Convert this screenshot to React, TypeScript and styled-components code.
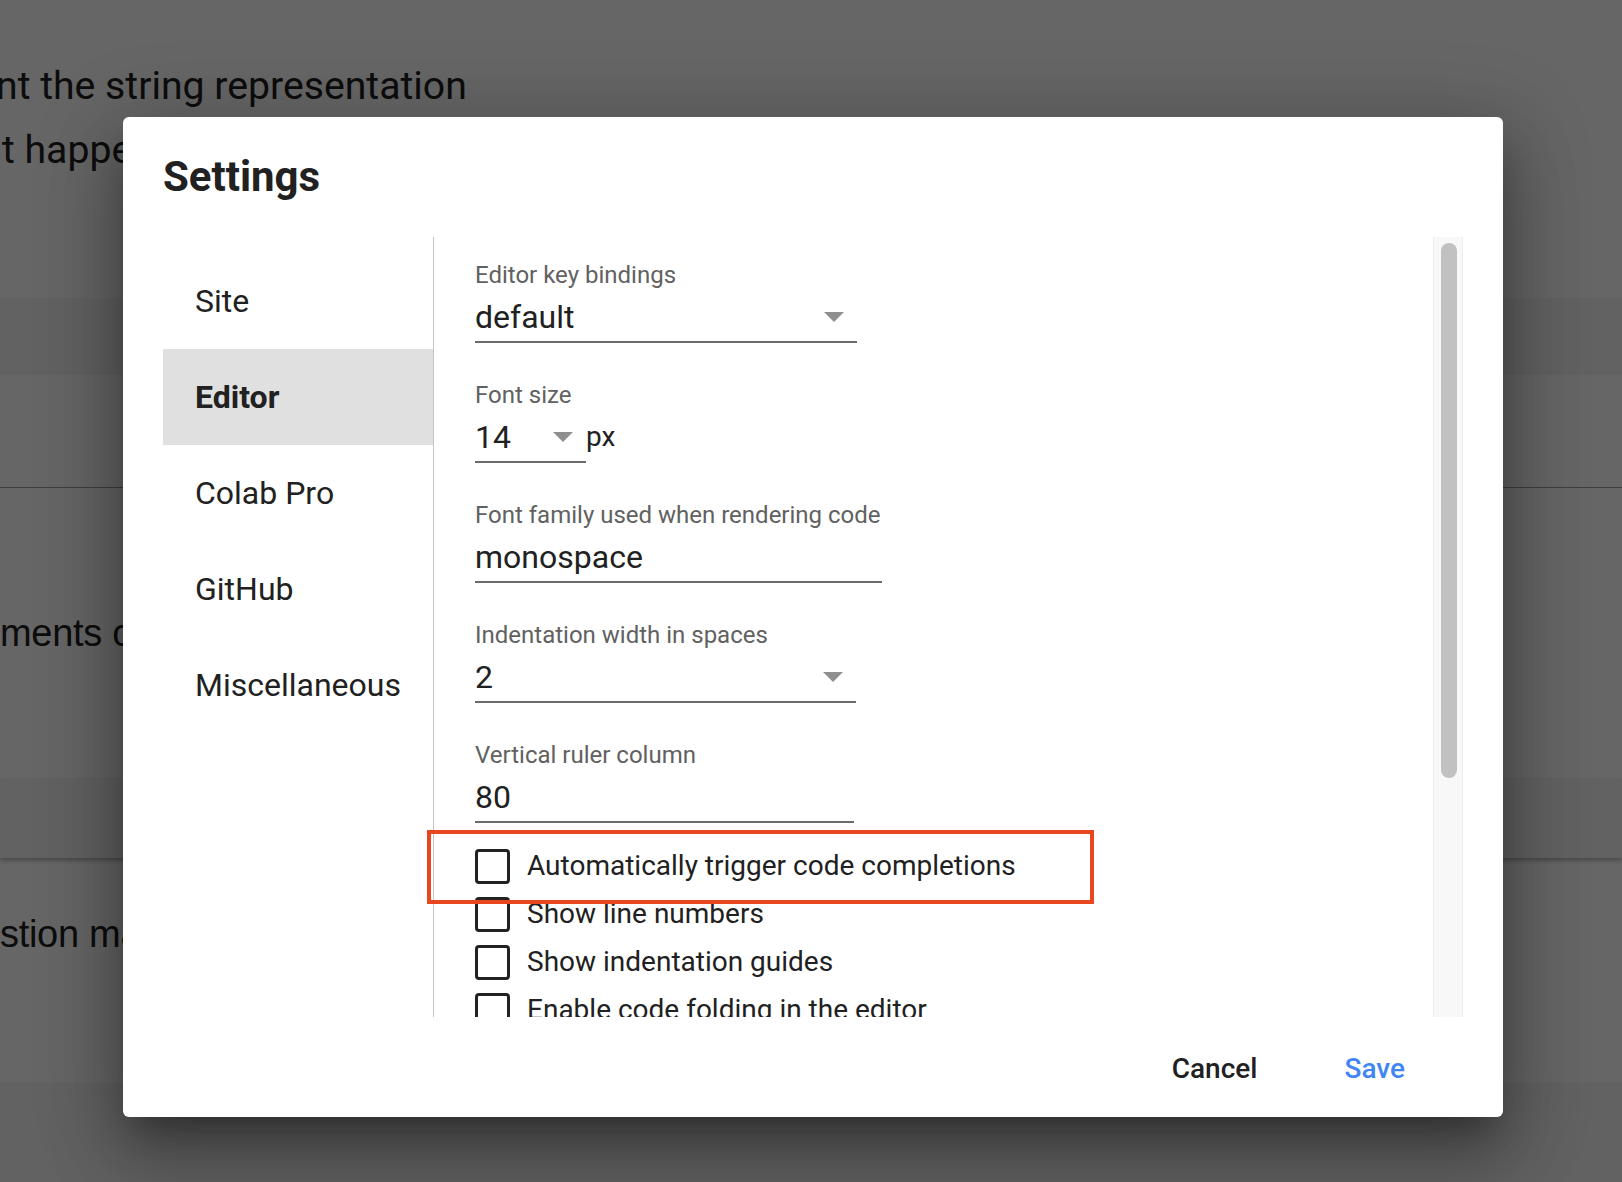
import React from 'react';
import styled, { createGlobalStyle } from 'styled-components';

const GlobalStyle = createGlobalStyle`
    html, body {
        margin: 0;
        padding: 0;
    }
    body {
        font-family: Roboto, 'Noto Sans', Arial, sans-serif;
        overflow: hidden;
    }
    * {
        box-sizing: border-box;
    }
`;

// Notebook page that sits behind the modal
const Page = styled.div`
    position: relative;
    width: 1622px;
    height: 1182px;
    overflow: hidden;
    background: #ffffff;
`;

const PageSection = styled.div<{ $height: number; $tone?: 'plain' | 'band'; $rule?: boolean; $shadow?: boolean }>`
    position: relative;
    height: ${(p) => p.$height}px;
    background: ${(p) => (p.$tone === 'band' ? '#f4f4f4' : '#ffffff')};
    border-bottom: ${(p) => (p.$rule ? '1px solid #9e9e9e' : 'none')};
    box-shadow: ${(p) => (p.$shadow ? '0 2px 5px rgba(0, 0, 0, 0.35)' : 'none')};
    z-index: ${(p) => (p.$shadow ? 1 : 0)};
    display: flex;
    flex-direction: column;
`;

const MarkdownLine = styled.div<{ $indent: number }>`
    font-family: Roboto, sans-serif;
    font-size: 39.2px;
    line-height: 64px;
    color: #222222;
    white-space: nowrap;
    text-indent: ${(p) => p.$indent}px;
`;

const MarkdownBlock = styled.div`
    padding-top: 54px;
`;

const CodeText = styled.div<{ $top: number }>`
    padding-top: ${(p) => p.$top}px;
    font-family: 'Liberation Sans', Arial, sans-serif;
    font-size: 38px;
    line-height: 50px;
    color: #222222;
    white-space: nowrap;
    letter-spacing: -0.3px;
`;

const Backdrop = styled.div`
    position: absolute;
    inset: 0;
    background: rgba(0, 0, 0, 0.6);
    z-index: 5;
`;

// Settings dialog
const Dialog = styled.div`
    position: absolute;
    left: 123px;
    top: 117px;
    width: 1380px;
    height: 1000px;
    background: #ffffff;
    border-radius: 6px;
    box-shadow: 0 22px 30px -14px rgba(0, 0, 0, 0.3), 0 40px 70px 6px rgba(0, 0, 0, 0.22),
        0 16px 80px 14px rgba(0, 0, 0, 0.18);
    display: flex;
    flex-direction: column;
    z-index: 10;
`;

const DialogTitle = styled.h2`
    margin: 36px 40px 36px;
    font-family: Roboto, sans-serif;
    font-size: 42px;
    line-height: 48px;
    font-weight: 700;
    color: #212121;
`;

const DialogBody = styled.div`
    display: flex;
    height: 780px;
    margin: 0 40px;
`;

const Sidebar = styled.nav`
    width: 271px;
    flex-shrink: 0;
    padding-top: 16px;
    border-right: 1px solid #c4c4c4;
`;

const NavItem = styled.div<{ $active?: boolean }>`
    height: 96px;
    line-height: 96px;
    padding-left: 32px;
    font-size: 32px;
    font-weight: ${(p) => (p.$active ? 700 : 400)};
    color: #212121;
    background: ${(p) => (p.$active ? '#e0e0e0' : 'transparent')};
    white-space: nowrap;
`;

const Content = styled.div`
    flex: 1;
    overflow: hidden;
    padding: 24px 0 0 41px;
`;

const FieldGroup = styled.div`
    display: flex;
    flex-direction: column;
    gap: 38px;
`;

const Field = styled.div`
    display: flex;
    flex-direction: column;
`;

const FieldLabel = styled.div`
    font-size: 24px;
    line-height: 28px;
    color: #616161;
    white-space: nowrap;
`;

const FieldRow = styled.div`
    display: flex;
    align-items: flex-start;
    gap: 0;
`;

const SelectBox = styled.div<{ $width: number }>`
    width: ${(p) => p.$width}px;
    display: flex;
    align-items: center;
    justify-content: space-between;
    padding: 8px 13px 4px 0;
    border-bottom: 2px solid #6b6b6b;
`;

const Value = styled.span`
    font-size: 32px;
    line-height: 40px;
    color: #212121;
`;

const Arrow = styled.span`
    width: 0;
    height: 0;
    border-left: 10px solid transparent;
    border-right: 10px solid transparent;
    border-top: 10px solid #8f8f8f;
`;

const Unit = styled.span`
    padding-top: 8px;
    font-size: 28px;
    line-height: 40px;
    color: #212121;
`;

const CheckList = styled.div`
    margin-top: 19px;
    display: flex;
    flex-direction: column;
`;

const CheckRow = styled.label`
    display: flex;
    align-items: center;
    gap: 17px;
    height: 48px;
`;

const CheckBox = styled.span`
    width: 35px;
    height: 35px;
    flex-shrink: 0;
    border: 3px solid #222222;
    border-radius: 4px;
`;

const CheckLabel = styled.span`
    font-size: 28px;
    line-height: 40px;
    color: #212121;
    white-space: nowrap;
`;

const Scrollbar = styled.div`
    width: 30px;
    flex-shrink: 0;
    background: #f8f8f8;
    border-left: 1px solid #ececec;
    border-right: 1px solid #ececec;
    padding: 6px 0 0 7px;
`;

const ScrollThumb = styled.div`
    width: 16px;
    height: 535px;
    border-radius: 8px;
    background: #c1c1c1;
`;

const Footer = styled.div`
    flex: 1;
    display: flex;
    align-items: center;
    justify-content: flex-end;
    gap: 55px;
    padding: 3px 82px 0 0;
`;

const FooterButton = styled.button<{ $primary?: boolean }>`
    border: none;
    background: transparent;
    padding: 0 16px;
    font-family: Roboto, sans-serif;
    font-size: 28px;
    line-height: 48px;
    font-weight: 500;
    color: ${(p) => (p.$primary ? '#4285f4' : '#212121')};
    cursor: pointer;
`;

// orange annotation frame drawn over the first checkbox
const Highlight = styled.div`
    position: absolute;
    left: 304px;
    top: 713px;
    width: 667px;
    height: 74px;
    border: 4px solid #e8461e;
    pointer-events: none;
`;

const navItems = ['Site', 'Editor', 'Colab Pro', 'GitHub', 'Miscellaneous'];

type FieldDef = { label: string; value: string; width: number; kind: 'select' | 'input'; unit?: string };

const fields: FieldDef[] = [
    { label: 'Editor key bindings', value: 'default', width: 382, kind: 'select' },
    { label: 'Font size', value: '14', width: 111, kind: 'select', unit: 'px' },
    { label: 'Font family used when rendering code', value: 'monospace', width: 407, kind: 'input' },
    { label: 'Indentation width in spaces', value: '2', width: 381, kind: 'select' },
    { label: 'Vertical ruler column', value: '80', width: 379, kind: 'input' },
];

const checks = [
    'Automatically trigger code completions',
    'Show line numbers',
    'Show indentation guides',
    'Enable code folding in the editor',
    'Automatically close brackets and quotes',
    'Show the connection status in the toolbar',
];

export default function App() {
    return (
        <>
            <GlobalStyle />
            <Page>
                <PageSection $height={298}>
                    <MarkdownBlock>
                        <MarkdownLine $indent={-4}>nt the string representation</MarkdownLine>
                        <MarkdownLine $indent={2}>t happens when you print an object</MarkdownLine>
                    </MarkdownBlock>
                </PageSection>
                <PageSection $height={77} $tone="band" />
                <PageSection $height={113} $rule />
                <PageSection $height={292}>
                    <CodeText $top={120}>ments can be</CodeText>
                </PageSection>
                <PageSection $height={78} $tone="band" $shadow />
                <PageSection $height={225}>
                    <CodeText $top={51}>stion marks</CodeText>
                </PageSection>
                <PageSection $height={99} $tone="band" />

                <Backdrop />

                <Dialog>
                    <DialogTitle>Settings</DialogTitle>
                    <DialogBody>
                        <Sidebar>
                            {navItems.map((item) => (
                                <NavItem key={item} $active={item === 'Editor'}>
                                    {item}
                                </NavItem>
                            ))}
                        </Sidebar>
                        <Content>
                            <FieldGroup>
                                {fields.map((f) => (
                                    <Field key={f.label}>
                                        <FieldLabel>{f.label}</FieldLabel>
                                        <FieldRow>
                                            <SelectBox $width={f.width}>
                                                <Value>{f.value}</Value>
                                                {f.kind === 'select' && <Arrow />}
                                            </SelectBox>
                                            {f.unit && <Unit>{f.unit}</Unit>}
                                        </FieldRow>
                                    </Field>
                                ))}
                            </FieldGroup>
                            <CheckList>
                                {checks.map((c) => (
                                    <CheckRow key={c}>
                                        <CheckBox />
                                        <CheckLabel>{c}</CheckLabel>
                                    </CheckRow>
                                ))}
                            </CheckList>
                        </Content>
                        <Scrollbar>
                            <ScrollThumb />
                        </Scrollbar>
                    </DialogBody>
                    <Footer>
                        <FooterButton>Cancel</FooterButton>
                        <FooterButton $primary>Save</FooterButton>
                    </Footer>
                    <Highlight />
                </Dialog>
            </Page>
        </>
    );
}
